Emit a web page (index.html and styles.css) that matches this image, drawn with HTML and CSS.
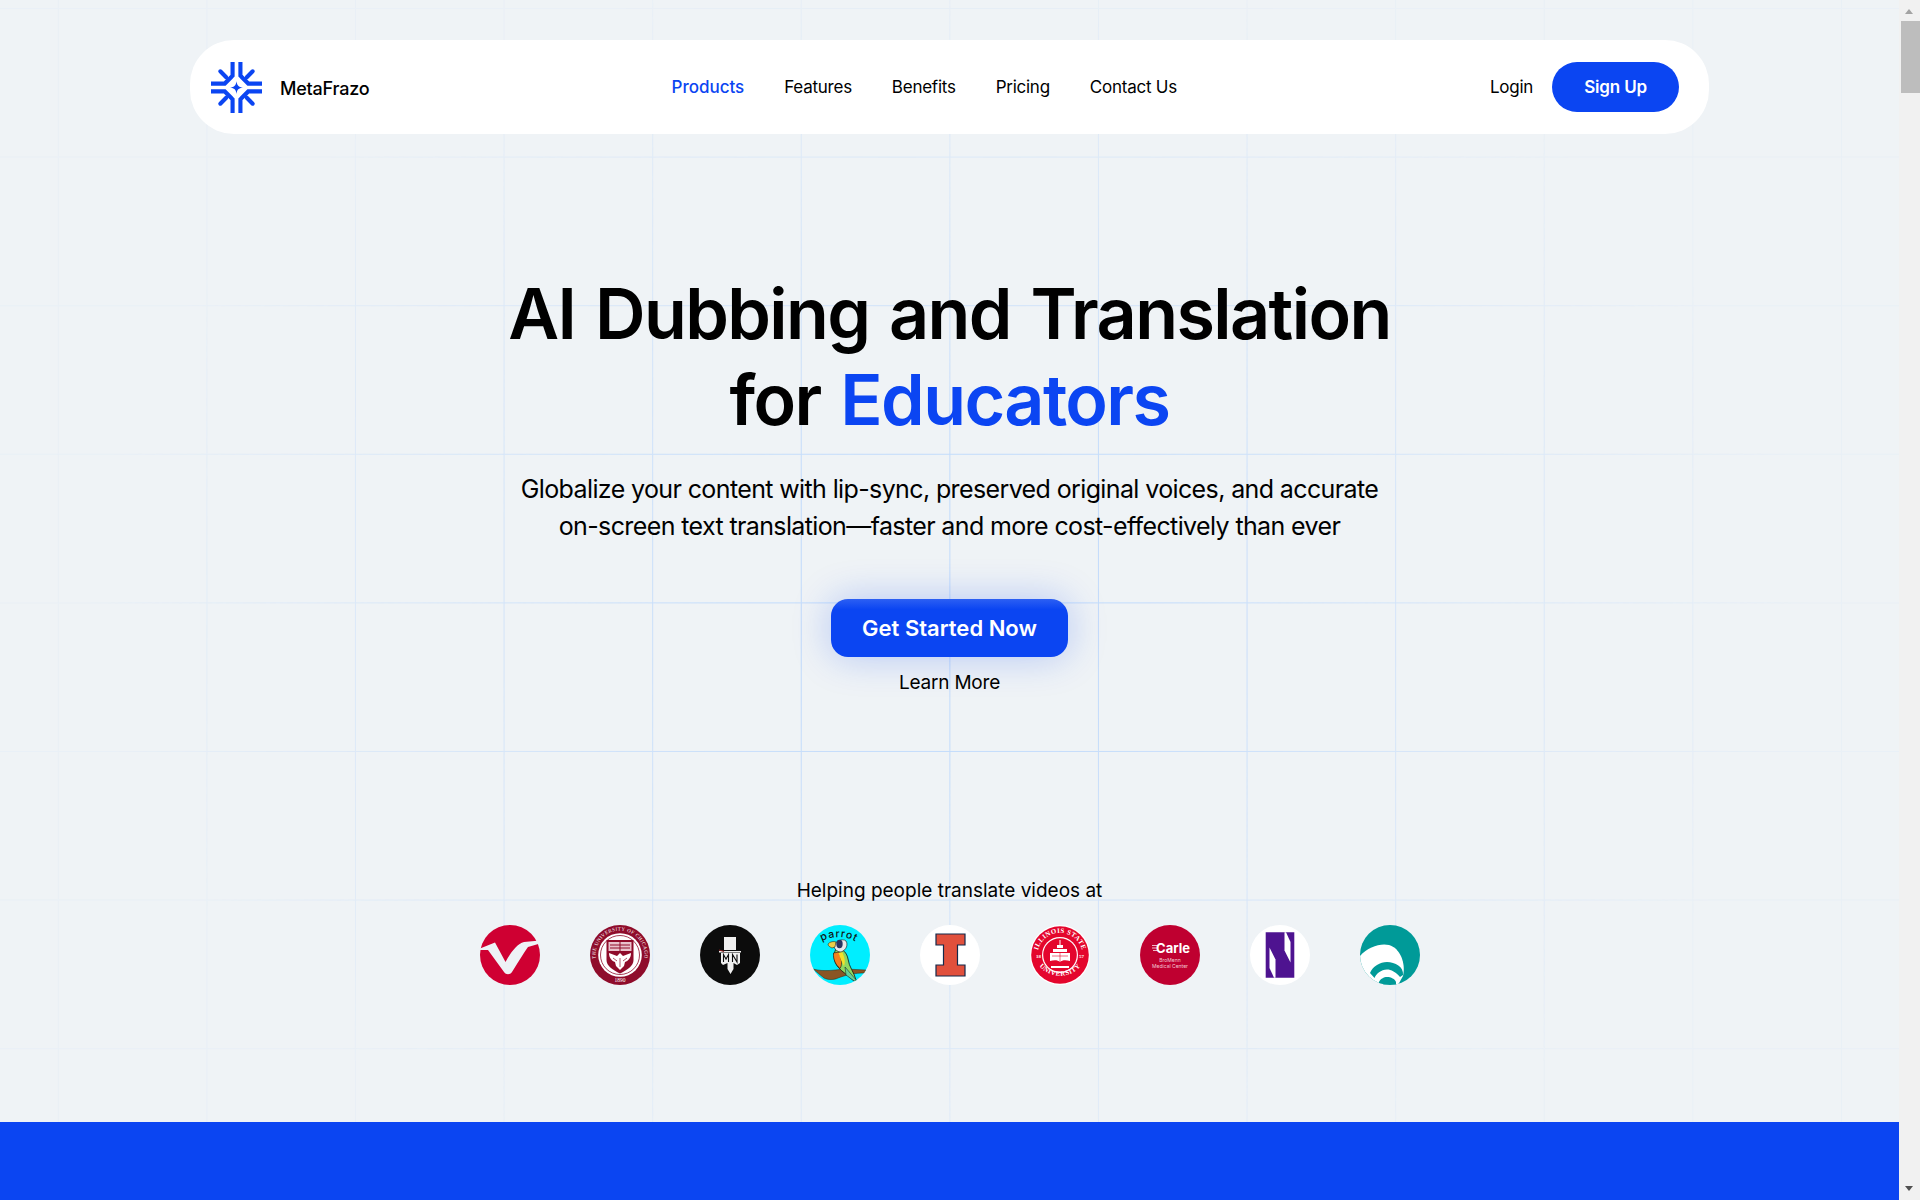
FILE: index.html
```html
<!DOCTYPE html>
<html lang="en">
<head>
<meta charset="utf-8">
<title>MetaFrazo</title>
<link rel="stylesheet" href="styles.css">
</head>
<body>
<div class="shell">
  <div class="page">
    <div class="grid-lines"></div>
    <header class="nav">
      <a class="brand">
        <svg class="brand-mark" viewBox="0 0 52 52" fill="none" stroke="#0b45f2" stroke-width="4.200">
          <path d="M22 0V14L15 21M30 0V14L37 21M22 52V38L15 31M30 52V38L37 31M0 22H14L21 15M0 30H14L21 37M52 22H38L31 15M52 30H38L31 37"/>
          <path d="M9.500 9.500L15.500 15.500M42.500 9.500L36.500 15.500M9.500 42.500L15.500 36.500M42.500 42.500L36.500 36.500" stroke-linecap="round"/>
          <path d="M26 19.500C26.700 24 28 25.300 32.500 26C28 26.700 26.700 28 26 32.500C25.300 28 24 26.700 19.500 26C24 25.300 25.300 24 26 19.500Z" fill="#0b45f2" stroke="none"/>
        </svg>
        <span class="brand-name">MetaFrazo</span>
      </a>
      <nav class="nav-links">
        <a class="nav-link active">Products</a>
        <a class="nav-link">Features</a>
        <a class="nav-link">Benefits</a>
        <a class="nav-link">Pricing</a>
        <a class="nav-link">Contact Us</a>
      </nav>
      <div class="nav-actions">
        <a class="nav-link">Login</a>
        <a class="signup">Sign Up</a>
      </div>
    </header>
    <main class="hero">
      <h1 class="title">AI Dubbing and Translation<br>for <span class="accent">Educators</span></h1>
      <p class="lead">Globalize your content with lip-sync, preserved original voices, and accurate<br>on-screen text translation—faster and more cost-effectively than ever</p>
      <a class="cta">Get Started Now</a>
      <a class="learn">Learn More</a>
    </main>
    <section class="trust">
      <p class="trust-title">Helping people translate videos at</p>
      <div class="logos">
        <svg class="logo" viewBox="0 0 60 60">
          <circle cx="30" cy="30" r="30" fill="#cf0032"/>
          <path d="M0 23.500L15 17.500L25.500 37C31 27 37 19 44 17L60 15.500V18.500L48 22C43 29 37 39 32 47C30 50 26 50 24 47L8 25L0 25Z" fill="#eef2f6"/>
        </svg>
        <svg class="logo" viewBox="0 0 60 60">
          <circle cx="30" cy="30" r="30" fill="#8f0c2b"/>
          <circle cx="30" cy="30" r="21.800" fill="#fff"/>
          <circle cx="30" cy="30" r="19.500" fill="none" stroke="#8f0c2b" stroke-width=".8"/>
          <path d="M16.500 15H43.500V35C43.500 41 37 45 30 48.500C23 45 16.500 41 16.500 35Z" fill="#8f0c2b"/>
          <path d="M18.500 17H41.500V26H18.500Z" fill="#e9c3cd"/>
          <path d="M20 20H40M20 23H40M30 17V26" stroke="#8f0c2b" stroke-width="1"/>
          <path d="M30 28L33 31L41 28C41 33 38 36 35 37L34 41L30 45L26 41L25 37C22 36 19 33 19 28L27 31Z" fill="#fff"/>
          <path d="M23 33L27 36M37 33L33 36M30 33V42" stroke="#8f0c2b" stroke-width=".7"/>
          <defs><path id="seal-a" d="M8.100 41A24.500 24.500 0 1 1 51.900 41"/></defs>
          <text class="seal-text" fill="#fff"><textPath href="#seal-a" startOffset="50%" text-anchor="middle">THE UNIVERSITY OF CHICAGO</textPath></text>
          <text class="seal-year" x="30" y="57" text-anchor="middle" fill="#fff">1890</text>
        </svg>
        <svg class="logo" viewBox="0 0 60 60">
          <circle cx="30" cy="30" r="30" fill="#0c0c0c"/>
          <path d="M24 12H36V25H24Z" fill="#f0f0f0"/>
          <path d="M19 26H41V27.500H19Z" fill="#f0f0f0"/>
          <path d="M21 28H40V38L37 40L33.500 38V44L30.500 49L27.500 44V38L23 40L21 38Z" fill="#f0f0f0"/>
          <path d="M23.500 37V29.500L26 34L28.500 29.500V37M32.500 37V29.500L37 37V29.500" stroke="#0c0c0c" stroke-width="1.100" fill="none"/>
          <path d="M19 25L24 26.500" stroke="#8c2020" stroke-width="1.200"/>
        </svg>
        <svg class="logo" viewBox="0 0 60 60">
          <clipPath id="clip-parrot"><circle cx="30" cy="30" r="30"/></clipPath>
          <g clip-path="url(#clip-parrot)">
            <rect width="60" height="60" fill="#0ef"/>
            <path d="M3 44C14 47 24 45 35 44L56 45L55 48C44 48 36 50 28 53C24 55 18 55 14 53C10 50 7 47 3 44Z" fill="#8a5524" stroke="#3a2410" stroke-width=".5"/>
            <path d="M27 22C33 24 37 28 38 34C39 42 44 47 46 55L44 56C38 50 32 47 28 42C23 36 23 28 27 22Z" fill="#8fd860" stroke="#111" stroke-width=".8"/>
            <path d="M23.500 28C23 35 26 40 30 43.500C33 39 31 32 29 27Z" fill="#f5801e" stroke="#111" stroke-width=".6"/>
            <path d="M28.500 28C30 32 32 38 34 41C36 37 34 30 32 27Z" fill="#f3e12a"/>
            <path d="M35 42L47 56L44 56L36 50Z" fill="#66cf9a" stroke="#111" stroke-width=".5"/>
            <path d="M24 22C24 16 33 13 36 16C38 19 37 25 31 27C28 27 25 25 24 22Z" fill="#e9e9e9" stroke="#111" stroke-width=".6"/>
            <ellipse cx="29.500" cy="19" rx="3.200" ry="4.200" fill="#2a3560"/>
            <path d="M18 19C20 16.500 24 16 26 17L25 22L22 23C20 22 18 21 18 19Z" fill="#ecd04a" stroke="#111" stroke-width=".5"/>
            <defs><path id="parrot-arc" d="M10 17.500C19 10.500 37 10 48 18"/></defs>
            <text class="parrot-word"><textPath href="#parrot-arc" startOffset="50%" text-anchor="middle">parrot</textPath></text>
          </g>
        </svg>
        <svg class="logo" viewBox="0 0 60 60">
          <circle cx="30" cy="30" r="30" fill="#fff"/>
          <path d="M16 9H45V20H37.500V40H45V51H16V40H23.500V20H16Z" fill="#e1503c" stroke="#13294b" stroke-width="1.200"/>
        </svg>
        <svg class="logo" viewBox="0 0 60 60">
          <circle cx="30" cy="30" r="30" fill="#fff"/>
          <circle cx="30" cy="30" r="28.800" fill="#e4062d"/>
          <circle cx="30" cy="30" r="18" fill="#fff"/>
          <circle cx="30" cy="30" r="16.800" fill="#e4062d"/>
          <defs>
            <path id="seal-b" d="M8.500 37A22.500 22.500 0 1 1 51.500 37"/>
            <path id="seal-c" d="M7 38A27 27 0 0 0 53 38"/>
          </defs>
          <text class="seal-bold" fill="#fff"><textPath href="#seal-b" startOffset="50%" text-anchor="middle">ILLINOIS STATE</textPath></text>
          <text class="seal-bold" fill="#fff"><textPath href="#seal-c" startOffset="50%" text-anchor="middle">UNIVERSITY</textPath></text>
          <text class="seal-side" x="6" y="33" fill="#fff">18</text>
          <text class="seal-side" x="49" y="33" fill="#fff">57</text>
          <path d="M20 28H40V36C36 35 32 35 30 37C28 35 24 35 20 36Z M23 24H37V27H23Z M27 20H33V23H27Z M29.500 15H30.500V20H29.500Z M21 41H39V43H21Z" fill="#fff"/>
          <path d="M30 28V37M22 31H38" stroke="#e4062d" stroke-width=".6"/>
        </svg>
        <svg class="logo" viewBox="0 0 60 60">
          <circle cx="30" cy="30" r="30" fill="#bf0030"/>
          <path d="M12 20.500H18M12 23H18M13 25.500H18" stroke="#f0b8c6" stroke-width="1.200"/>
          <text class="carle-word" x="33" y="28" text-anchor="middle" fill="#fff">Carle</text>
          <text class="carle-sub" x="30" y="37" text-anchor="middle" fill="#f3c9d4">BroMenn</text>
          <text class="carle-sub" x="30" y="43" text-anchor="middle" fill="#f3c9d4">Medical Center</text>
        </svg>
        <svg class="logo" viewBox="0 0 60 60">
          <circle cx="30" cy="30" r="30" fill="#fff"/>
          <path d="M15.700 7.300H44.300V52.700H15.700Z" fill="#4e1390"/>
          <path d="M34.500 7.300H36L40.500 17V37.500L34.500 25.500Z" fill="#fff"/>
          <path d="M25.500 52.700H24L19.500 43V22.500L25.500 34.500Z" fill="#fff"/>
        </svg>
        <svg class="logo" viewBox="0 0 60 60">
          <clipPath id="clip-wave"><circle cx="30" cy="30" r="30"/></clipPath>
          <g clip-path="url(#clip-wave)">
            <rect width="60" height="60" fill="#009a98"/>
            <path d="M0 31C8 22 20 18 29 20C40 23 46 38 43 51L38 60H0Z" fill="#fff"/>
            <path d="M10 48C13 41 20 37 27 37C35 37 44 42 43 50L40 52C36 47 31 44.500 27 44.500C21 44.500 16 49 14.500 53Z" fill="#009a98"/>
            <path d="M19 57C20 54 24 52 27 52C31 52 35 54 36 57V60H19Z" fill="#009a98"/>
          </g>
        </svg>
      </div>
    </section>
    <div class="band"></div>
  </div>
  <aside class="scrollbar" aria-hidden="true">
    <span class="arrow arrow-up"></span>
    <span class="thumb"></span>
    <span class="arrow arrow-down"></span>
  </aside>
</div>
</body>
</html>
```
FILE: styles.css
```css
* { box-sizing: border-box; }
html, body { margin: 0; height: 100%; }
body { font-family: Inter, "Liberation Sans", sans-serif; color: #000; background: #eff3f6; overflow: hidden; }
a { color: inherit; text-decoration: none; }
.shell { display: flex; height: 1200px; }
.page {
  position: relative;
  flex: 1;
  min-width: 0;
  display: flex;
  flex-direction: column;
  align-items: center;
  overflow: hidden;
  background: #eff3f6;
}
.grid-lines {
  position: absolute;
  inset: 0;
  pointer-events: none;
  background-image:
    linear-gradient(to right, #c2dbfb 1.200px, transparent 1.200px),
    linear-gradient(to bottom, #c2dbfb 1.200px, transparent 1.200px);
  background-size: 148.600px 148.600px;
  background-position: 57.800px 8px;
  -webkit-mask-image: radial-gradient(ellipse 860px 640px at 50% 50%, #000 22%, rgba(0,0,0,.5) 62%, rgba(0,0,0,.12) 100%);
  mask-image: radial-gradient(ellipse 860px 640px at 50% 50%, #000 22%, rgba(0,0,0,.5) 62%, rgba(0,0,0,.12) 100%);
}
.nav {
  position: relative;
  margin-top: 40px;
  width: 80%;
  height: 94px;
  flex: none;
  display: flex;
  justify-content: space-between;
  align-items: center;
  padding: 0 30px 0 21px;
  background: #fff;
  border-radius: 44px;
}
.brand { display: flex; align-items: center; gap: 18px; }
.brand-mark { display: block; width: 51px; height: 51px; position: relative; top: .5px; }
.brand-name { font-size: 18px; font-weight: 500; letter-spacing: -.2px; position: relative; top: 1px; }
.nav-links { display: flex; gap: 40px; margin-right: 11px; }
.nav-link { font-size: 17px; font-weight: 400; letter-spacing: -.25px; white-space: nowrap; }
.nav-link.active { color: #0b45f2; font-weight: 500; letter-spacing: 0; }
.nav-actions { display: flex; align-items: center; justify-content: flex-end; gap: 19px; }
.signup {
  display: flex;
  align-items: center;
  justify-content: center;
  width: 127px;
  height: 50px;
  border-radius: 25px;
  background: #0b45f2;
  color: #fff;
  font-size: 17px;
  font-weight: 600;
  letter-spacing: -.15px;
}
.hero { position: relative; display: flex; flex-direction: column; align-items: center; text-align: center; margin-top: 137px; }
.title { margin: 0; font-size: 70px; line-height: 86px; font-weight: 600; letter-spacing: -1.600px; word-spacing: 3.500px; }
.accent { color: #0b45f2; }
.lead { margin: 28px 0 0; font-size: 25px; line-height: 37px; font-weight: 400; letter-spacing: -.62px; }
.cta {
  margin-top: 54px;
  display: flex;
  align-items: center;
  justify-content: center;
  width: 237px;
  height: 58px;
  border-radius: 17px;
  background: linear-gradient(#2c5ff3, #0b45f2 18%);
  color: #fff;
  font-size: 22px;
  font-weight: 600;
  letter-spacing: 0;
  box-shadow: 0 0 38px rgba(11,69,242,.26);
}
.learn { margin-top: 14px; font-size: 19px; line-height: 24px; letter-spacing: -.2px; }
.trust { position: relative; margin-top: 184px; display: flex; flex-direction: column; align-items: center; }
.trust-title { margin: 0; font-size: 19px; line-height: 24px; letter-spacing: 0; }
.logos { display: flex; gap: 50px; margin-top: 22px; }
.logo { display: block; width: 60px; height: 60px; }
.seal-text { font: 400 5px "Liberation Serif", serif; letter-spacing: .45px; }
.seal-year { font: 400 5.500px "Liberation Serif", serif; }
.seal-bold { font: 700 6.800px "Liberation Serif", serif; letter-spacing: .45px; }
.seal-side { font: 700 5px "Liberation Serif", serif; }
.parrot-word { font: 500 10.500px Inter, sans-serif; letter-spacing: .8px; fill: #111; }
.carle-word { font: 700 13px Inter, sans-serif; }
.carle-sub { font: 400 5px Inter, sans-serif; }
.band { position: absolute; left: 0; right: 0; top: 1122px; bottom: 0; background: #0b45f2; }
.scrollbar {
  flex: none;
  width: 21px;
  background: #f1f1f1;
  position: relative;
}
.thumb { position: absolute; left: 2px; right: 0; top: 21px; height: 72px; background: #bdbdbd; }
.arrow { position: absolute; left: 6px; width: 0; height: 0; border-left: 4.500px solid transparent; border-right: 4.500px solid transparent; }
.arrow-up { top: 9px; border-bottom: 5px solid #a3a3a3; }
.arrow-down { bottom: 9px; border-top: 5px solid #505050; }
```
